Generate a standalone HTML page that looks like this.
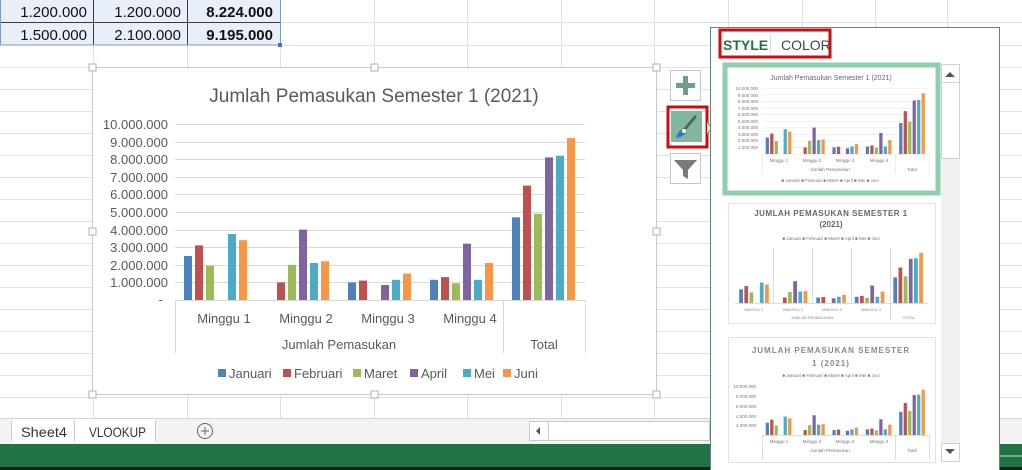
<!DOCTYPE html>
<html><head><meta charset="utf-8"><style>
html,body{margin:0;padding:0;width:1022px;height:470px;overflow:hidden;background:#fff;font-family:"Liberation Sans",sans-serif}
svg{display:block}
</style></head><body>
<svg width="1022" height="470" viewBox="0 0 1022 470" xmlns="http://www.w3.org/2000/svg" font-family="Liberation Sans, sans-serif">
<defs>
<g id="bars">
<g fill="#4f81bd"><rect x="184" y="256" width="8" height="44"/><rect x="348" y="282.4" width="8" height="17.6"/><rect x="430" y="279.8" width="8" height="20.2"/><rect x="512" y="217.3" width="8" height="82.7"/></g>
<g fill="#c0504d"><rect x="195" y="245.4" width="8" height="54.6"/><rect x="277" y="282.4" width="8" height="17.6"/><rect x="359" y="280.6" width="8" height="19.4"/><rect x="441" y="277.1" width="8" height="22.9"/><rect x="523" y="185.6" width="8" height="114.4"/></g>
<g fill="#9bbb59"><rect x="206" y="265.7" width="8" height="34.3"/><rect x="288" y="264.8" width="8" height="35.2"/><rect x="452" y="283.3" width="8" height="16.7"/><rect x="534" y="213.8" width="8" height="86.2"/></g>
<g fill="#8064a2"><rect x="299" y="229.6" width="8" height="70.4"/><rect x="381" y="285" width="8" height="15"/><rect x="463" y="243.7" width="8" height="56.3"/><rect x="545" y="157.4" width="8" height="142.6"/></g>
<g fill="#4bacc6"><rect x="228" y="234" width="8" height="66"/><rect x="310" y="263" width="8" height="37"/><rect x="392" y="279.8" width="8" height="20.2"/><rect x="474" y="279.8" width="8" height="20.2"/><rect x="556" y="155.7" width="8" height="144.3"/></g>
<g fill="#f79646"><rect x="239" y="240.2" width="8" height="59.8"/><rect x="321" y="261.3" width="8" height="38.7"/><rect x="403" y="273.6" width="8" height="26.4"/><rect x="485" y="263" width="8" height="37"/><rect x="567" y="138.1" width="8" height="161.9"/></g>
</g>
<g id="grid">
<g stroke="#d9d9d9" stroke-width="1">
<line x1="175" y1="124.5" x2="585" y2="124.5"/><line x1="175" y1="142.5" x2="585" y2="142.5"/><line x1="175" y1="159.5" x2="585" y2="159.5"/><line x1="175" y1="177.5" x2="585" y2="177.5"/><line x1="175" y1="194.5" x2="585" y2="194.5"/><line x1="175" y1="212.5" x2="585" y2="212.5"/><line x1="175" y1="230.5" x2="585" y2="230.5"/><line x1="175" y1="247.5" x2="585" y2="247.5"/><line x1="175" y1="265.5" x2="585" y2="265.5"/><line x1="175" y1="282.5" x2="585" y2="282.5"/>
<line x1="175" y1="300.5" x2="585" y2="300.5"/>
<line x1="175.5" y1="300" x2="175.5" y2="353"/><line x1="503.5" y1="300" x2="503.5" y2="353"/><line x1="585.5" y1="300" x2="585.5" y2="353"/>
</g>
</g>
</defs>
<g stroke="#e1e1e1" stroke-width="1">
<line x1="0" y1="67.5" x2="1022" y2="67.5"/><line x1="0" y1="89.5" x2="1022" y2="89.5"/><line x1="0" y1="111.5" x2="1022" y2="111.5"/><line x1="0" y1="133.5" x2="1022" y2="133.5"/><line x1="0" y1="155.5" x2="1022" y2="155.5"/><line x1="0" y1="177.5" x2="1022" y2="177.5"/><line x1="0" y1="199.5" x2="1022" y2="199.5"/><line x1="0" y1="221.5" x2="1022" y2="221.5"/><line x1="0" y1="243.5" x2="1022" y2="243.5"/><line x1="0" y1="265.5" x2="1022" y2="265.5"/><line x1="0" y1="287.5" x2="1022" y2="287.5"/><line x1="0" y1="309.5" x2="1022" y2="309.5"/><line x1="0" y1="331.5" x2="1022" y2="331.5"/><line x1="0" y1="353.5" x2="1022" y2="353.5"/><line x1="0" y1="375.5" x2="1022" y2="375.5"/><line x1="0" y1="397.5" x2="1022" y2="397.5"/>
<line x1="280" y1="22.5" x2="1022" y2="22.5"/><line x1="280" y1="45.5" x2="1022" y2="45.5"/>
<line x1="93.5" y1="45" x2="93.5" y2="418"/><line x1="187.5" y1="45" x2="187.5" y2="418"/><line x1="280.5" y1="45" x2="280.5" y2="418"/><line x1="374.5" y1="0" x2="374.5" y2="418"/><line x1="467.5" y1="0" x2="467.5" y2="418"/><line x1="561.5" y1="0" x2="561.5" y2="418"/><line x1="654.5" y1="0" x2="654.5" y2="418"/><line x1="728.5" y1="0" x2="728.5" y2="418"/><line x1="802.5" y1="0" x2="802.5" y2="418"/><line x1="875.5" y1="0" x2="875.5" y2="418"/><line x1="947.5" y1="0" x2="947.5" y2="418"/>
</g>
<rect x="0" y="0" width="280" height="45" fill="#e9eff8"/>
<g stroke="#3b3b3b" stroke-width="1"><line x1="0" y1="22.5" x2="280" y2="22.5"/><line x1="93.5" y1="0" x2="93.5" y2="45"/><line x1="187.5" y1="0" x2="187.5" y2="45"/></g>
<rect x="0.5" y="-1" width="280" height="46" fill="none" stroke="#7a9ad4" stroke-width="1"/>
<rect x="278" y="43" width="4" height="4" fill="#4a6fc0"/>
<g font-size="15" fill="#111" text-anchor="end">
<text x="87" y="17">1.200.000</text><text x="181" y="17">1.200.000</text><text x="273" y="17" font-weight="bold">8.224.000</text>
<text x="87" y="40">1.500.000</text><text x="181" y="40">2.100.000</text><text x="273" y="40" font-weight="bold">9.195.000</text>
</g>
<rect x="92.5" y="67.5" width="564" height="327" fill="#fff" stroke="#c8c8c8"/>
<g fill="#fff" stroke="#b0b0b0"><rect x="89" y="64" width="7" height="7"/><rect x="371" y="64" width="7" height="7"/><rect x="653" y="64" width="7" height="7"/><rect x="89" y="228" width="7" height="7"/><rect x="653" y="228" width="7" height="7"/><rect x="89" y="391" width="7" height="7"/><rect x="371" y="391" width="7" height="7"/><rect x="653" y="391" width="7" height="7"/></g>
<text x="374" y="102" font-size="19" fill="#595959" text-anchor="middle">Jumlah Pemasukan Semester 1 (2021)</text>
<use href="#grid"/>
<use href="#bars"/>
<g font-size="13" fill="#595959" text-anchor="end">
<text x="168" y="129">10.000.000</text><text x="168" y="147">9.000.000</text><text x="168" y="164">8.000.000</text><text x="168" y="182">7.000.000</text><text x="168" y="199">6.000.000</text><text x="168" y="217">5.000.000</text><text x="168" y="235">4.000.000</text><text x="168" y="252">3.000.000</text><text x="168" y="270">2.000.000</text><text x="168" y="287">1.000.000</text><text x="163" y="304">-</text>
</g>
<g font-size="13" fill="#595959" text-anchor="middle">
<text x="224" y="323">Minggu 1</text><text x="306" y="323">Minggu 2</text><text x="388" y="323">Minggu 3</text><text x="470" y="323">Minggu 4</text>
<text x="339" y="349">Jumlah Pemasukan</text><text x="544" y="349">Total</text>
</g>
<g font-size="13" fill="#595959">
<rect x="218" y="369" width="8" height="8" fill="#4f81bd"/><text x="229" y="378">Januari</text>
<rect x="283" y="369" width="8" height="8" fill="#c0504d"/><text x="294" y="378">Februari</text>
<rect x="353" y="369" width="8" height="8" fill="#9bbb59"/><text x="364" y="378">Maret</text>
<rect x="410" y="369" width="8" height="8" fill="#8064a2"/><text x="421" y="378">April</text>
<rect x="463" y="369" width="8" height="8" fill="#4bacc6"/><text x="474" y="378">Mei</text>
<rect x="503" y="369" width="8" height="8" fill="#f79646"/><text x="514" y="378">Juni</text>
</g>
<rect x="670.5" y="70.5" width="30" height="30" fill="#fff" stroke="#c6c6c6"/>
<path d="M685.5 76 v19 M676 85.5 h19" stroke="#6aa08a" stroke-width="5"/>
<rect x="668" y="107" width="39" height="40" fill="none" stroke="#d10a0a" stroke-width="3"/>
<rect x="671" y="111" width="31" height="31" fill="#80b89f"/>
<path d="M695 117 L684 130" stroke="#4a6a5c" stroke-width="3" stroke-linecap="round"/>
<path d="M676 138 Q678 131 683 129 Q687 130 686 133 Q682 137 676 138Z" fill="#3a72c4"/>
<circle cx="684" cy="131" r="2" fill="#fff"/>
<path d="M707 122 L712 128 L707 134" fill="#fff" stroke="#5a8a70"/>
<rect x="670.5" y="153.5" width="30" height="30" fill="#fff" stroke="#c6c6c6"/>
<path d="M674 160 h23 l-9 10 v9 l-5 -3 v-6 z" fill="#7a7a7a"/>
<rect x="0" y="418" width="1022" height="26" fill="#f3f3f3"/>
<line x1="0" y1="418.5" x2="1022" y2="418.5" stroke="#d4d4d4"/>
<rect x="12" y="419" width="62" height="24" fill="#fff"/><rect x="75" y="419" width="80" height="24" fill="#fff"/>
<g stroke="#c8c8c8"><line x1="11.5" y1="421" x2="11.5" y2="441"/><line x1="74.5" y1="421" x2="74.5" y2="441"/><line x1="155.5" y1="421" x2="155.5" y2="441"/></g>
<text x="21" y="437" font-size="14" fill="#333" textLength="46" lengthAdjust="spacingAndGlyphs">Sheet4</text>
<text x="89" y="437" font-size="14" fill="#333" textLength="57" lengthAdjust="spacingAndGlyphs">VLOOKUP</text>
<circle cx="205" cy="431" r="7.5" fill="none" stroke="#666"/>
<path d="M205 427 v8 M201 431 h8" stroke="#666"/>
<rect x="529.5" y="421.5" width="180" height="19" fill="#fff" stroke="#c8c8c8"/>
<line x1="548.5" y1="422" x2="548.5" y2="440" stroke="#c8c8c8"/>
<path d="M540 427 l-4 4 l4 4z" fill="#555"/>
<rect x="0" y="444" width="1022" height="23" fill="#217346"/>
<rect x="0" y="467" width="1022" height="3" fill="#1b1b1b"/>
<rect x="975" y="450" width="3" height="12" fill="#fff"/><line x1="978" y1="456" x2="1022" y2="456" stroke="#d0e0d8"/>
<rect x="710.5" y="27.5" width="289" height="445" fill="#fff" stroke="#5d8a72"/>
<rect x="720" y="30" width="110" height="27" fill="none" stroke="#d10a0a" stroke-width="3"/>
<line x1="770.5" y1="34" x2="770.5" y2="54" stroke="#ddd"/>
<text x="723" y="50" font-size="14" font-weight="bold" fill="#217346">STYLE</text>
<text x="781" y="50" font-size="14" fill="#444">COLOR</text>
<rect x="941" y="64" width="19" height="398" fill="#f0f0f0"/>
<rect x="941.5" y="64.5" width="18" height="18" fill="#fff" stroke="#d0d0d0"/>
<path d="M945 77 l5 -5 l5 5z" fill="#555"/>
<rect x="941.5" y="82.5" width="18" height="76" fill="#fff" stroke="#d0d0d0"/>
<rect x="941.5" y="443.5" width="18" height="18" fill="#fff" stroke="#d0d0d0"/>
<path d="M945 449 l5 5 l5 -5z" fill="#555"/>
<rect x="725" y="65" width="213" height="128" fill="#fff" stroke="#8fcfae" stroke-width="5"/>
<text x="831" y="80" font-size="7" fill="#666" text-anchor="middle">Jumlah Pemasukan Semester 1 (2021)</text>
<g transform="translate(690.8,41.5) scale(0.407,0.375)"><use href="#grid"/><use href="#bars"/></g>
<g font-size="4.5" fill="#777" text-anchor="end"><text x="758" y="90">10.000.000</text><text x="758" y="97">9.000.000</text><text x="758" y="103">8.000.000</text><text x="758" y="110">7.000.000</text><text x="758" y="116">6.000.000</text><text x="758" y="123">5.000.000</text><text x="758" y="129">4.000.000</text><text x="758" y="136">3.000.000</text><text x="758" y="142">2.000.000</text><text x="758" y="149">1.000.000</text></g>
<g font-size="4.5" fill="#777" text-anchor="middle"><text x="779" y="162">Minggu 1</text><text x="812" y="162">Minggu 2</text><text x="845" y="162">Minggu 3</text><text x="879" y="162">Minggu 4</text><text x="830" y="171">Jumlah Pemasukan</text><text x="912" y="171">Total</text><text x="830" y="182">■ Januari ■ Februari ■ Maret ■ April ■ Mei ■ Juni</text></g>
<rect x="728.5" y="203.5" width="207" height="120" fill="#fff" stroke="#e2e2e2"/>
<text x="831" y="216" font-size="8" font-weight="bold" fill="#666" text-anchor="middle" letter-spacing="0.5">JUMLAH PEMASUKAN SEMESTER 1</text>
<text x="831" y="227" font-size="8" font-weight="bold" fill="#666" text-anchor="middle">(2021)</text>
<text x="831" y="240" font-size="4.5" fill="#777" text-anchor="middle">■ Januari ■ Februari ■ Maret ■ April ■ Mei ■ Juni</text>
<g transform="translate(652.7,210) scale(0.47,0.31)"><use href="#bars"/></g>
<g stroke="#ddd"><line x1="735" y1="303.5" x2="928" y2="303.5"/><line x1="773.5" y1="248" x2="773.5" y2="303"/><line x1="812.5" y1="248" x2="812.5" y2="303"/><line x1="851.5" y1="248" x2="851.5" y2="303"/><line x1="890.5" y1="248" x2="890.5" y2="320"/></g>
<g font-size="4" fill="#888" text-anchor="middle"><text x="754" y="311">MINGGU 1</text><text x="793" y="311">MINGGU 2</text><text x="832" y="311">MINGGU 3</text><text x="871" y="311">MINGGU 4</text><text x="812" y="319">JUMLAH PEMASUKAN</text><text x="909" y="319">TOTAL</text></g>
<rect x="728.5" y="337.5" width="207" height="125" fill="#fff" stroke="#e2e2e2"/>
<text x="831" y="353" font-size="8" font-weight="bold" fill="#888" text-anchor="middle" letter-spacing="1">JUMLAH PEMASUKAN SEMESTER</text>
<text x="831" y="366" font-size="8" font-weight="bold" fill="#888" text-anchor="middle" letter-spacing="1">1 (2021)</text>
<text x="831" y="377" font-size="4.5" fill="#777" text-anchor="middle">■ Januari ■ Februari ■ Maret ■ April ■ Mei ■ Juni</text>
<g transform="translate(690.8,351) scale(0.407,0.28)"><use href="#bars"/></g>
<g stroke="#ddd"><line x1="762" y1="435.5" x2="929" y2="435.5"/><line x1="762.5" y1="435" x2="762.5" y2="460"/><line x1="895.5" y1="435" x2="895.5" y2="460"/><line x1="929.5" y1="435" x2="929.5" y2="460"/></g>
<g font-size="4.5" fill="#777" text-anchor="end"><text x="756" y="388">10.000.000</text><text x="756" y="398">8.000.000</text><text x="756" y="408">6.000.000</text><text x="756" y="418">4.000.000</text><text x="756" y="427">2.000.000</text></g>
<g font-size="4.5" fill="#777" text-anchor="middle"><text x="779" y="443">Minggu 1</text><text x="812" y="443">Minggu 2</text><text x="845" y="443">Minggu 3</text><text x="879" y="443">Minggu 4</text><text x="830" y="452">Jumlah Pemasukan</text><text x="912" y="452">Total</text></g>
</svg>
</body></html>
